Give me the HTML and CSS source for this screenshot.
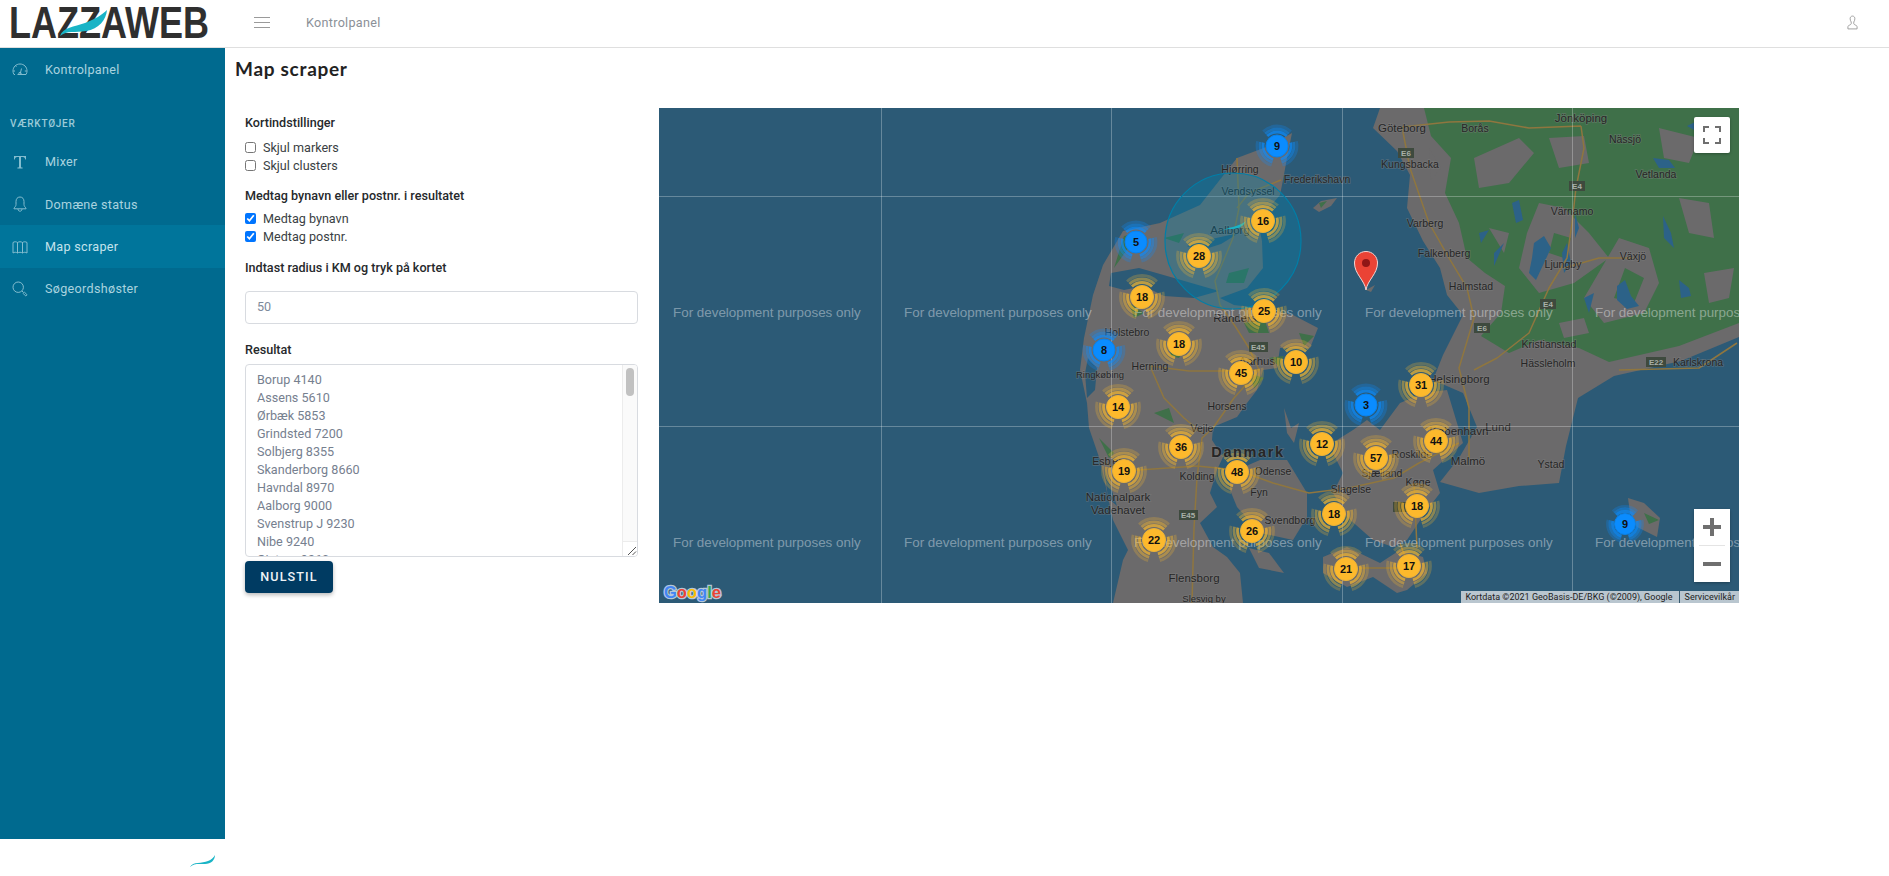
FILE: index.html
```html
<!DOCTYPE html>
<html lang="da">
<head>
<meta charset="utf-8">
<title>Map scraper</title>
<link rel="stylesheet" href="styles.css">
</head>
<body>
<header class="topbar">
  <a class="logo" href="#">
    <svg class="logo-svg" viewBox="0 0 225 47" width="225" height="47">
      <text class="logo-text" x="9" y="38" textLength="200" lengthAdjust="spacingAndGlyphs">LAZZAWEB</text>
      <path class="swoosh" d="M60 36C63 27 74 27 85 23C95 19 102 15 107 10C106 20 99 29 86 31C75 33 67 30 60 36Z"/>
    </svg>
  </a>
  <button class="burger" aria-label="Menu"><span></span><span></span><span></span></button>
  <span class="crumb">Kontrolpanel</span>
  <svg class="user" viewBox="0 0 12 16" width="11" height="15">
    <path d="M6 1C4.2 1 3.4 2.4 3.4 4C3.4 5.6 4.2 6.8 4.6 7.4V9.4C4.2 10.6 2 10.8 1 12.2V15H11V12.2C10 10.8 7.8 10.6 7.4 9.4V7.4C7.8 6.8 8.6 5.6 8.6 4C8.6 2.4 7.8 1 6 1Z"/>
  </svg>
</header>

<div class="shell">
  <div class="side-col">
    <nav class="sidebar">
      <a class="nav-item" href="#">
        <svg class="nav-icon" viewBox="0 0 16 14" width="16" height="14"><path d="M3 12.5H2C1.2 11.4 1 10 1 9C1 5 4 2 8 2C12 2 15 5 15 9C15 10 14.8 11.4 14 12.5H5.5M8 12.5L9.5 6.5M3 9H1.5M4.5 4.5L3.5 3.8M12.8 9H14.5"/><circle cx="8" cy="11.5" r="1.2"/></svg>
        <span>Kontrolpanel</span>
      </a>
      <div class="nav-heading">VÆRKTØJER</div>
      <a class="nav-item" href="#">
        <svg class="nav-icon" viewBox="0 0 14 14" width="14" height="14"><path class="solid" d="M1 1H13V4.5H12.2C12 3 11.4 2 9.8 2H8V11.5C8 12.4 8.6 12.6 9.6 12.6V13.4H4.4V12.6C5.4 12.6 6 12.4 6 11.5V2H4.2C2.6 2 2 3 1.8 4.5H1Z"/></svg>
        <span>Mixer</span>
      </a>
      <a class="nav-item" href="#">
        <svg class="nav-icon" viewBox="0 0 14 16" width="14" height="16"><path d="M7 1C4.4 1 3 3 3 5.5V8.5C3 10 2 11 1 12V12.8H13V12C12 11 11 10 11 8.5V5.5C11 3 9.6 1 7 1ZM5 13C5 14.4 5.9 15.2 7 15.2C8.1 15.2 9 14.4 9 13"/></svg>
        <span>Domæne status</span>
      </a>
      <a class="nav-item active" href="#">
        <svg class="nav-icon" viewBox="0 0 16 14" width="16" height="14"><path d="M1 2.5C2.5 1.5 4 1.5 5.5 2.5V13C4 12 2.5 12 1 13ZM5.5 2.5C7 1.5 9 1.5 10.5 2.5V13C9 12 7 12 5.5 13ZM10.5 2.5C12 1.5 13.5 1.5 15 2.5V13C13.5 12 12 12 10.5 13Z"/></svg>
        <span>Map scraper</span>
      </a>
      <a class="nav-item" href="#">
        <svg class="nav-icon" viewBox="0 0 16 16" width="16" height="16"><circle cx="6.2" cy="6.2" r="5.2"/><path d="M10 10L11.2 11.2M11.2 12.4L13.2 14.6C14 15.4 15.4 14.2 14.6 13.2L12.4 11.2C12 10.8 10.8 11.8 11.2 12.4Z"/></svg>
        <span>Søgeordshøster</span>
      </a>
    </nav>
    <svg class="side-foot" viewBox="0 0 225 37" width="225" height="37"><path class="swoosh" d="M190 28C193 22 202 25 208 22C211 21 214 18 215 16C215 21 211 25 205 25C199 25 194 24 190 28Z"/></svg>
  </div>

  <main class="main">
    <h1 class="title">Map scraper</h1>
    <div class="content">
      <form class="form">
        <div class="label first">Kortindstillinger</div>
        <div class="checks">
          <label class="check"><input type="checkbox"><span>Skjul markers</span></label>
          <label class="check"><input type="checkbox"><span>Skjul clusters</span></label>
        </div>
        <div class="label">Medtag bynavn eller postnr. i resultatet</div>
        <div class="checks tight">
          <label class="check"><input type="checkbox" checked><span>Medtag bynavn</span></label>
          <label class="check"><input type="checkbox" checked><span>Medtag postnr.</span></label>
        </div>
        <div class="label">Indtast radius i KM og tryk på kortet</div>
        <input class="text-input" type="text" value="50">
        <div class="label result">Resultat</div>
        <div class="result-wrap">
          <textarea class="result-box" readonly>Borup 4140
Assens 5610
Ørbæk 5853
Grindsted 7200
Solbjerg 8355
Skanderborg 8660
Havndal 8970
Aalborg 9000
Svenstrup J 9230
Nibe 9240
Gistrup 9260
Storvorde 9280
Kongerslev 9293
Hals 9370
Nørresundby 9400
Vadum 9430
Brovst 9460
Løkken 9480
Pandrup 9490
Hobro 9500
Arden 9510
Skørping 9520
Støvring 9530</textarea>
          <div class="scroll-track"><div class="scroll-thumb"></div></div>
          <div class="scroll-corner">
            <svg viewBox="0 0 15 15" width="15" height="15"><path d="M5 13L13 5M9.5 13L13 9.5"/></svg>
          </div>
        </div>
        <button class="reset" type="button">NULSTIL</button>
      </form>

      <div class="map">
        <svg class="map-svg" viewBox="0 0 1080 495" width="1080" height="495">
          <defs>
            <g id="rings-y">
              <circle class="ring r1 ry" r="14.5" pathLength="360"/><circle class="ring r2 ry" r="18" pathLength="360"/><circle class="ring r3 ry" r="21.5" pathLength="360"/>
              <circle class="core cy" r="11.5"/>
            </g>
            <g id="rings-b">
              <circle class="ring r1 rb" r="14" pathLength="360"/><circle class="ring r2 rb" r="17" pathLength="360"/><circle class="ring r3 rb" r="20" pathLength="360"/>
              <circle class="core cb" r="11"/>
            </g>
            <g id="rings-s">
              <circle class="ring r1 rb" r="12.5" pathLength="360"/><circle class="ring r2 rb" r="15" pathLength="360"/><circle class="ring r3 rb" r="17.5" pathLength="360"/>
              <circle class="core cb" r="10.5"/>
            </g>
          </defs>

          <g class="land">
            <path class="grey" d="M578 50L610 38L633 25L628 50L624 72L621 87L610 100L600 118L603 133L604 160L588 180L561 190L575 197L600 200L634 207L659 220L651 240L621 240L618 260L604 262L598 282L588 295L578 309L554 319L553 332L564 349L558 362L551 385L558 399L541 415L554 439L568 449L581 465L584 495L454 495L464 452L469 442L454 412L441 352L430 320L428 295L421 262L425 230L434 187L444 157L464 123L501 115L541 97Z"/>
            <path class="grey" d="M571 365L601 352L628 352L648 385L648 409L634 432L601 425L578 399L571 382Z"/>
            <path class="grey" d="M678 332L694 322L708 312L721 322L741 295L765 285L788 282L795 305L804 335L774 362L781 385L768 402L748 432L734 439L714 432L688 409L674 385L684 365L674 345Z"/>
            <path class="grey" d="M664 449L688 439L721 455L741 442L764 449L768 465L748 482L738 485L714 469L688 479L664 465Z"/>
            <path class="grey" d="M969 390L985 395L1001 410L998 429L978 419L971 405Z"/>
            <path class="grey" d="M654 100L662 93L678 90L672 98L660 104Z"/>
            <path class="grey" d="M707 182L716 177L712 184Z"/>
            <path class="grey" d="M625 300L632 320L640 315L635 335L628 325Z"/>
            <path class="grey" d="M590 440L610 445L625 465L600 460Z"/>
            <path class="grey" d="M721 0L714 20L738 43L751 67L748 100L764 133L781 160L788 187L804 207L794 227L784 247L774 272L804 285L818 319L800 350L781 374L820 385L860 378L900 375L907 338L919 290L955 268L1022 253L1080 229V0Z"/>
            <path class="green" d="M765 0L772 28L792 50L786 85L800 115L808 150L826 165L846 178L842 205L822 228L850 245L880 232L920 240L950 254L1020 238L1080 215V0Z"/>
            <path class="grey" d="M815 50L860 30L875 45L850 75L820 80ZM880 95L905 100L930 125L950 150L915 175L880 185L860 160L868 125ZM960 130L990 140L1000 175L985 205L945 215L925 190ZM1000 20L1040 30L1030 55L1005 50ZM1020 90L1050 95L1055 130L1030 125ZM830 120L850 125L845 145ZM890 30L925 28L930 55L900 60ZM1045 165L1075 160L1070 190L1050 195ZM770 40L782 60L772 72ZM900 215L925 210L930 225L905 230Z"/>
            <path class="green" d="M895 125L912 130L905 150L890 145ZM966 160L985 170L975 195L955 190Z"/>
            <path class="green" d="M570 165L590 160L585 175L567 175ZM510 237L525 240L520 250L512 248ZM470 195L485 205L475 210ZM585 215L605 210L610 225L590 225ZM640 225L655 228L645 238ZM495 305L510 300L515 315ZM590 265L605 270L595 280ZM505 130L525 125L520 135ZM465 128L480 125L455 160ZM985 405L1000 412L990 416ZM660 95L668 93L662 100ZM440 330L455 345L450 350ZM610 250L625 248L620 258Z"/>
            <path class="bay" d="M452 165L480 160L515 170L560 183L535 190L505 188L485 178L465 182L450 178ZM528 138L548 132L580 125L562 136L540 143ZM429 250L438 260L436 282L428 290L426 265ZM445 360L452 380L458 398L449 390Z"/>
            <path class="water" d="M875 135L885 128L892 140L885 155L877 172L870 165L873 150ZM958 178L966 172L972 188L980 198L968 201L958 192ZM853 95L860 92L864 112L857 115ZM903 145L908 135L912 155L905 165ZM835 145L845 135L835 158ZM994 50L1010 52L1016 60L1000 60ZM1004 108L1012 125L1015 140L1005 130ZM916 105L920 120L916 130ZM1020 172L1030 180L1032 188L1022 190ZM1028 18L1040 12L1035 22ZM925 190L935 185L930 205ZM820 125L830 122L822 135Z"/>
            <path class="road" d="M578 50L580 100L574 130L556 173L561 197L576 218L590 240L600 262L575 290L554 320L543 330L538 370L535 420L533 495"/>
            <path class="road" d="M491 258L530 263L560 263L600 262M491 258L505 290L525 310L543 325M465 363L538 358L578 362L614 375L650 385L690 380L735 370L760 355L800 335M741 435L750 460L700 460M758 440L755 375M622 72L590 85L578 100M465 363L445 355"/>
            <path class="road" d="M743 19L751 60L770 115L790 150L808 180L815 210L800 260L810 300L810 350M922 18L925 40L917 80L913 115L908 150L890 180L870 225L838 250L815 262M743 19L790 14L830 13L870 20L922 18M974 150L940 150L905 160M960 262L1040 260L1078 235"/>
          </g>
          <g class="labels">
            <text class="lbl big" x="743" y="24" text-anchor="middle">Göteborg</text>
            <text class="lbl" x="816" y="24" text-anchor="middle">Borås</text>
            <text class="lbl big" x="922" y="14" text-anchor="middle">Jönköping</text>
            <text class="lbl" x="966" y="35" text-anchor="middle">Nässjö</text>
            <text class="lbl" x="997" y="70" text-anchor="middle">Vetlanda</text>
            <text class="lbl" x="913" y="107" text-anchor="middle">Värnamo</text>
            <text class="lbl" x="974" y="152" text-anchor="middle">Växjö</text>
            <text class="lbl" x="904" y="160" text-anchor="middle">Ljungby</text>
            <text class="lbl" x="751" y="60" text-anchor="middle">Kungsbacka</text>
            <text class="lbl" x="766" y="119" text-anchor="middle">Varberg</text>
            <text class="lbl" x="785" y="149" text-anchor="middle">Falkenberg</text>
            <text class="lbl" x="812" y="182" text-anchor="middle">Halmstad</text>
            <text class="lbl" x="889" y="259" text-anchor="middle">Hässleholm</text>
            <text class="lbl" x="1039" y="258" text-anchor="middle">Karlskrona</text>
            <text class="lbl" x="890" y="240" text-anchor="middle">Kristianstad</text>
            <text class="lbl" x="581" y="65" text-anchor="middle">Hjørring</text>
            <text class="lbl" x="658" y="75" text-anchor="middle">Frederikshavn</text>
            <text class="lbl" x="589" y="87" text-anchor="middle">Vendsyssel</text>
            <text class="lbl big" x="571" y="126" text-anchor="middle">Aalborg</text>
            <text class="lbl" x="468" y="228" text-anchor="middle">Holstebro</text>
            <text class="lbl big" x="576" y="214" text-anchor="middle">Randers</text>
            <text class="lbl" x="491" y="262" text-anchor="middle">Herning</text>
            <text class="lbl big" x="598" y="257" text-anchor="middle">Aarhus</text>
            <text class="lbl" x="568" y="302" text-anchor="middle">Horsens</text>
            <text class="lbl" x="543" y="324" text-anchor="middle">Vejle</text>
            <text class="lbl" x="538" y="372" text-anchor="middle">Kolding</text>
            <text class="lbl" x="451" y="357" text-anchor="middle">Esbjerg</text>
            <text class="lbl sm" x="441" y="270" text-anchor="middle">Ringkøbing</text>
            <text class="lbl" x="614" y="367" text-anchor="middle">Odense</text>
            <text class="lbl" x="600" y="388" text-anchor="middle">Fyn</text>
            <text class="lbl" x="631" y="416" text-anchor="middle">Svendborg</text>
            <text class="lbl big" x="459" y="393" text-anchor="middle">Nationalpark</text>
            <text class="lbl big" x="459" y="406" text-anchor="middle">Vadehavet</text>
            <text class="lbl big" x="535" y="474" text-anchor="middle">Flensborg</text>
            <text class="lbl sm" x="545" y="494" text-anchor="middle">Slesvig by</text>
            <text class="lbl" x="692" y="385" text-anchor="middle">Slagelse</text>
            <text class="lbl" x="723" y="369" text-anchor="middle">Sjælland</text>
            <text class="lbl" x="753" y="350" text-anchor="middle">Roskilde</text>
            <text class="lbl big" x="800" y="327" text-anchor="middle">København</text>
            <text class="lbl" x="759" y="378" text-anchor="middle">Køge</text>
            <text class="lbl big" x="800" y="275" text-anchor="middle">Helsingborg</text>
            <text class="lbl big" x="809" y="357" text-anchor="middle">Malmö</text>
            <text class="lbl big" x="839" y="323" text-anchor="middle">Lund</text>
            <text class="lbl" x="892" y="360" text-anchor="middle">Ystad</text>
          </g>
          <g class="shields">
            <rect x="590" y="234" width="19" height="10"/><rect x="520" y="402" width="19" height="10"/><rect x="739" y="40" width="16" height="10"/><rect x="910" y="73" width="16" height="10"/><rect x="881" y="191" width="16" height="10"/><rect x="987" y="249" width="20" height="10"/><rect x="815" y="215" width="16" height="10"/><rect x="734" y="394" width="14" height="10"/>
          </g>
          <g class="shield-text">
            <text x="599" y="242" text-anchor="middle">E45</text><text x="529" y="410" text-anchor="middle">E45</text><text x="747" y="48" text-anchor="middle">E6</text><text x="918" y="81" text-anchor="middle">E4</text><text x="889" y="199" text-anchor="middle">E4</text><text x="997" y="257" text-anchor="middle">E22</text><text x="823" y="223" text-anchor="middle">E6</text>
          </g>
          <g class="grid">
            <path d="M222.5 0V495M452.5 0V495M683.5 0V495M913.5 0V495M0 88.5H1080M0 318.5H1080"/>
          </g>
          <g class="dev">
            <text x="14" y="209">For development purposes only</text>
            <text x="245" y="209">For development purposes only</text>
            <text x="475" y="209">For development purposes only</text>
            <text x="706" y="209">For development purposes only</text>
            <text x="936" y="209">For development purposes only</text>
            <text x="14" y="439">For development purposes only</text>
            <text x="245" y="439">For development purposes only</text>
            <text x="475" y="439">For development purposes only</text>
            <text x="706" y="439">For development purposes only</text>
            <text x="936" y="439">For development purposes only</text>
          </g>
          <circle class="radius" cx="574" cy="133" r="68"/>
          <path class="swoosh" d="M561 124C570 118 578 120 587 113C584 120 577 121 571 121C567 121 564 122 561 124Z"/>
          <g class="markers">
            <use href="#rings-b" x="618" y="38"/><text x="618" y="42">9</text>
            <use href="#rings-y" x="604" y="113"/><text x="604" y="117">16</text>
            <use href="#rings-b" x="477" y="134"/><text x="477" y="138">5</text>
            <use href="#rings-y" x="540" y="148"/><text x="540" y="152">28</text>
            <use href="#rings-y" x="483" y="189"/><text x="483" y="193">18</text>
            <use href="#rings-y" x="605" y="203"/><text x="605" y="207">25</text>
            <use href="#rings-b" x="445" y="242"/><text x="445" y="246">8</text>
            <use href="#rings-y" x="520" y="236"/><text x="520" y="240">18</text>
            <use href="#rings-y" x="637" y="254"/><text x="637" y="258">10</text>
            <use href="#rings-y" x="582" y="265"/><text x="582" y="269">45</text>
            <use href="#rings-y" x="762" y="277"/><text x="762" y="281">31</text>
            <use href="#rings-b" x="707" y="297"/><text x="707" y="301">3</text>
            <use href="#rings-y" x="459" y="299"/><text x="459" y="303">14</text>
            <use href="#rings-y" x="663" y="336"/><text x="663" y="340">12</text>
            <use href="#rings-y" x="777" y="333"/><text x="777" y="337">44</text>
            <use href="#rings-y" x="522" y="339"/><text x="522" y="343">36</text>
            <use href="#rings-y" x="717" y="350"/><text x="717" y="354">57</text>
            <use href="#rings-y" x="465" y="363"/><text x="465" y="367">19</text>
            <use href="#rings-y" x="578" y="364"/><text x="578" y="368">48</text>
            <use href="#rings-y" x="675" y="406"/><text x="675" y="410">18</text>
            <use href="#rings-y" x="758" y="398"/><text x="758" y="402">18</text>
            <use href="#rings-y" x="593" y="423"/><text x="593" y="427">26</text>
            <use href="#rings-y" x="495" y="432"/><text x="495" y="436">22</text>
            <use href="#rings-y" x="687" y="461"/><text x="687" y="465">21</text>
            <use href="#rings-y" x="750" y="458"/><text x="750" y="462">17</text>
            <use href="#rings-s" x="966" y="416"/><text x="966" y="420">9</text>
          </g>
          <text class="lbl xl" x="589" y="349" text-anchor="middle">Danmark</text>
          <path class="pin" d="M707 182C705.5 172 695.5 166 695.5 155C695.5 148.5 700.5 143.5 707 143.5C713.5 143.5 718.5 148.5 718.5 155C718.5 166 708.5 172 707 182Z"/>
          <circle class="pin-dot" cx="707" cy="155" r="4"/>
          <text class="google" x="5" y="490"><tspan class="g-b">G</tspan><tspan class="g-r">o</tspan><tspan class="g-y">o</tspan><tspan class="g-b">g</tspan><tspan class="g-g">l</tspan><tspan class="g-r">e</tspan></text>
        </svg>
        <button class="map-btn full" type="button" aria-label="Fuld skærm">
          <svg viewBox="0 0 18 18" width="18" height="18"><path d="M1 6V1H6M12 1H17V6M17 12V17H12M6 17H1V12"/></svg>
        </button>
        <div class="zoom">
          <button class="map-btn plus" type="button" aria-label="Zoom ind"><svg viewBox="0 0 18 18" width="18" height="18"><path d="M0 9H18M9 0V18"/></svg></button>
          <div class="zoom-sep"></div>
          <button class="map-btn minus" type="button" aria-label="Zoom ud"><svg viewBox="0 0 18 18" width="18" height="18"><path d="M0 9H18"/></svg></button>
        </div>
        <div class="attr"><span>Kortdata ©2021 GeoBasis-DE/BKG (©2009), Google</span><span class="attr-terms">Servicevilkår</span></div>
      </div>
    </div>
  </main>
</div>
</body>
</html>
```

FILE: styles.css
```css
* { box-sizing: border-box; }
html, body { margin: 0; height: 100%; overflow: hidden; background: #fff; }
body { font-family: Roboto, "Liberation Sans", sans-serif; font-size: 12.6px; color: #212529; }

.topbar { display: flex; align-items: center; height: 48px; padding-bottom: 2px; border-bottom: 1px solid #dfdfdf; }
.logo { display: block; width: 225px; height: 45px; flex: none; }
.logo-svg { display: block; }
.logo-text { font-family: "Liberation Sans", sans-serif; font-weight: 700; font-size: 44px; fill: #2f2f2f; }
.swoosh { fill: #19b4c6; }
.burger { display: flex; flex-direction: column; gap: 3.5px; width: 16px; padding: 0; margin: 0 0 0 29px; background: none; border: 0; }
.burger span { display: block; height: 1.5px; background: #9a9a9a; }
.crumb { margin-left: 36px; color: #8b9097; letter-spacing: .3px; font-size: 12.6px; }
.user { margin-left: auto; margin-right: 31px; fill: none; stroke: #9a9a9a; stroke-width: 1; }

.shell { display: flex; height: 828px; }
.side-col { width: 225px; flex: none; display: flex; flex-direction: column; }
.sidebar { height: 791px; background: #006a8f; }
.side-foot { display: block; }
.nav-item { display: flex; align-items: center; height: 42.3px; padding-left: 12px; color: #a9d3df; text-decoration: none; font-size: 12.6px; letter-spacing: .3px; }
.nav-item span { margin-left: 17px; }
.nav-item.active { background: #00759b; color: #c4e3ec; }
.nav-icon { width: 16px; flex: none; fill: none; stroke: #84bdcf; stroke-width: 1; }
.nav-icon .solid { fill: #84bdcf; stroke: none; }
.nav-heading { height: 50.5px; padding: 27px 0 0 10px; line-height: 14px; color: #9ccad8; font-size: 10px; font-weight: 500; letter-spacing: .75px; }

.main { flex: 1; min-width: 0; padding-left: 10px; }
.title { margin: 0; height: 60px; padding-top: 9px; font-family: Lato, sans-serif; font-size: 19px; font-weight: 700; line-height: 24px; letter-spacing: .7px; color: #222; }
.content { display: flex; gap: 21px; padding-left: 10px; align-items: flex-start; }

.form { width: 393px; flex: none; display: flex; flex-direction: column; align-items: flex-start; padding-top: 5px; }
.label { height: 18px; line-height: 18px; margin-top: 13px; font-weight: 500; color: #26292c; font-size: 12.6px; }
.label.first { margin-top: 0.5px; }
.label.result { margin-top: 17px; }
.checks { display: flex; flex-direction: column; margin-top: 6.5px; }
.checks.tight { margin-top: 4.5px; }
.check { display: flex; align-items: center; height: 18px; color: #3a3f44; }
.check input { width: 11px; height: 11px; margin: 0 7px 0 0; accent-color: #0075ff; }
.text-input { width: 100%; height: 33px; margin-top: 14px; padding: 0 11px 2px; border: 1px solid #d8dbe0; border-radius: 4px; color: #7d8a9b; font: 12.6px Roboto, sans-serif; background: #fff; }
.result-wrap { position: relative; width: 100%; height: 193px; margin-top: 5px; }
.result-box { display: block; width: 100%; height: 100%; padding: 6px 26px 0 11px; border: 1px solid #d8dbe0; border-radius: 4px; color: #76808f; font: 12.6px/18px Roboto, sans-serif; background: #fff; resize: none; overflow: hidden; outline: none; }
.scroll-track { position: absolute; top: 1px; right: 1px; bottom: 16px; width: 15px; padding: 3px 3px; background: #fafafa; border-left: 1px solid #ececec; border-radius: 0 3px 0 0; }
.scroll-thumb { width: 8px; height: 28px; background: #c1c1c1; border-radius: 4px; }
.scroll-corner { position: absolute; right: 1px; bottom: 1px; width: 15px; height: 15px; background: #fff; border-left: 1px solid #ececec; border-top: 1px solid #ececec; border-radius: 0 0 3px 0; }
.scroll-corner svg { display: block; fill: none; stroke: #555; stroke-width: 1; }
.reset { height: 32px; width: 88px; margin-top: 4px; border: 0; border-radius: 4px; background: #003b62; color: #eef3f6; font: 500 12.6px Roboto, sans-serif; letter-spacing: 1.1px; box-shadow: 0 2px 4px rgba(0,0,0,.28); }

.map { position: relative; flex: none; width: 1080px; height: 495px; overflow: hidden; background: #2c5a76; }
.map-svg { display: block; }
.land path { stroke-linejoin: round; }
.grey { fill: #6b6a6b; }
.green { fill: #3f7049; }
.bay { fill: #2c5a76; }
.water { fill: #2c6288; }
.road { fill: none; stroke: #8f763f; stroke-width: 1.5; }
.lbl { font-family: "Liberation Sans", sans-serif; font-size: 10.5px; fill: #262626; paint-order: stroke; stroke: rgba(130,130,130,.45); stroke-width: 1.5px; }
.lbl.sm { font-size: 9.5px; }
.lbl.big { font-size: 11.5px; }
.lbl.xl { font-size: 14.5px; font-weight: 700; letter-spacing: 1.6px; }
.shields rect { fill: #3e4a3e; }
.shield-text text { font-family: "Liberation Sans", sans-serif; font-size: 8px; font-weight: 700; fill: #a8b0a8; }
.grid path { fill: none; stroke: rgba(255,255,255,.28); stroke-width: 1; }
.dev text { font-family: "Liberation Sans", sans-serif; font-size: 13.4px; fill: rgba(255,255,255,.4); }
.radius { fill: rgba(0,130,175,.32); stroke: #007fa8; stroke-width: 1.2; }
.ring { fill: none; stroke-width: 2.8; stroke-dasharray: 88 32; stroke-dashoffset: -106; }
.ry { stroke: #f3b52f; }
.rb { stroke: #0a8cff; }
.r1 { opacity: .72; }
.r2 { opacity: .48; }
.r3 { opacity: .26; }
.core { stroke-width: 1; }
.cy { fill: #fdb92c; stroke: #e9b23a; }
.cb { fill: #0a8cff; stroke: #0a82ea; }
.markers text { font-family: "Liberation Sans", sans-serif; font-size: 11px; font-weight: 700; fill: #111; text-anchor: middle; }
.pin { fill: #ea4335; stroke: #f5d5d2; stroke-width: 1; }
.pin-dot { fill: #8f1616; }
.google { font-family: "Liberation Sans", sans-serif; font-size: 16.5px; font-weight: 700; paint-order: stroke; stroke: rgba(205,220,235,.85); stroke-width: 2.5px; }
.g-b { fill: #4285f4; }
.g-r { fill: #ea4335; }
.g-y { fill: #fbbc05; }
.g-g { fill: #34a853; }

.map-btn { position: relative; display: flex; align-items: center; justify-content: center; width: 36px; height: 36px; padding: 0; border: 0; background: #fff; }
.map-btn svg { display: block; fill: none; stroke: #6f6f6f; }
.full { position: absolute; top: 9px; right: 9px; border-radius: 2px; box-shadow: 0 1px 3px rgba(0,0,0,.3); }
.full svg { stroke-width: 2; }
.plus svg, .minus svg { stroke-width: 4; }
.zoom { position: absolute; right: 9px; bottom: 21px; width: 36px; height: 73px; background: #fff; border-radius: 2px; box-shadow: 0 1px 3px rgba(0,0,0,.3); }
.zoom-sep { height: 1px; margin: 0 5px; background: #e4e4e4; }
.attr { position: absolute; right: 0; bottom: 0; display: flex; height: 12px; background: #b9c6cf; color: #1d1d1d; font: 9px/12px Roboto, sans-serif; padding: 0 4px; white-space: nowrap; }
.attr-terms { margin-left: 6px; padding-left: 5px; border-left: 1px solid #365a70; }
```
